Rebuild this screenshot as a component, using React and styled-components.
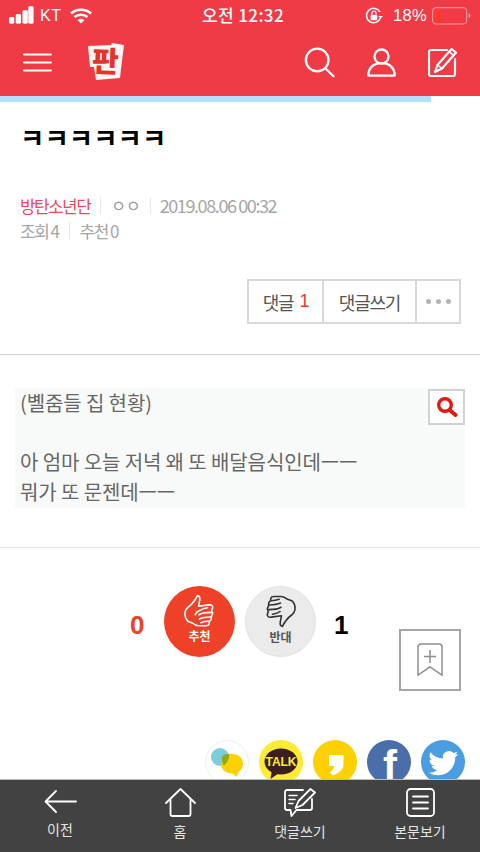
import React from "react";
import styled, { createGlobalStyle } from "styled-components";

const KR = `"Noto Sans CJK KR", "Liberation Sans", sans-serif`;

const Global = createGlobalStyle`
  html, body { margin: 0; padding: 0; background: #fff; }
  * { box-sizing: border-box; }
  body { font-family: ${KR}; }
`;

const Page = styled.div`
  width: 480px; height: 852px; display: flex; flex-direction: column; overflow: hidden; background: #fff;
`;
const Top = styled.header`
  height: 96px; background: #f03b47; color: #fff; display: flex; flex-direction: column; flex: none;
`;
const Status = styled.div`
  height: 30px; display: flex; align-items: center; padding: 1px 0 0 9px; position: relative;
  font-family: "Liberation Sans", sans-serif; font-size: 16px; color: #fff;
`;
const Carrier = styled.span`margin: 0 8px 0 5px; letter-spacing: 0.6px; font-size: 16px;`;
const Clock = styled.span`
  position: absolute; left: 0; right: 0; top: 4px; text-align: center; font-family: ${KR}; font-size: 17px; font-weight: 500; line-height: 22px; letter-spacing: .4px; padding-left: 6px;
`;
const StatusRight = styled.div`
  margin-left: auto; display: flex; align-items: center; padding-right: 9px;
`;
const Percent = styled.span`margin: 0 5px 0 10px; font-size: 16.5px; letter-spacing: .3px;`;
const Nav = styled.div`
  flex: 1; display: flex; align-items: center; padding: 0 23px 1px 23px;
`;
const NavRight = styled.div`margin-left: auto; display: flex; align-items: center; gap: 32px;`;
const Progress = styled.div`height: 6px; background: #fff; flex: none;`;
const ProgressFill = styled.div`height: 100%; background: #b5dffb;`;
const Title = styled.h1`
  margin: 17px 0 0 20px; font-size: 26.5px; line-height: 36px; font-weight: 700; color: #000; letter-spacing: 0;
`;
const Meta = styled.div`
  margin: 38px 0 0 20px; display: flex; flex-direction: column; font-size: 17px; line-height: 25px; color: #a6a6a6; letter-spacing: -1.5px;
`;
const MetaRow = styled.div`display: flex; align-items: center;`;
const Author = styled.span`color: #f5475a; letter-spacing: -1.6px;`;
const Sep = styled.i`
  display: inline-block; width: 1px; height: 17px; background: #e8e8e8; margin: 0 ${p => p.$gap}px;
`;
const Nick = styled.span`letter-spacing: 0; font-size: 16px; color: #999;`;
const DateText = styled.span`font-size: 18px; letter-spacing: -1.4px;`;
const Actions = styled.div`
  margin: 36px 19px 0 auto; display: flex; height: 45px; border: 2px solid #d8d8d8; background: #fff; flex: none;
`;
const ActBtn = styled.div`
  width: ${p => p.$w}px; display: flex; align-items: center; justify-content: center; font-size: 18px; color: #555; letter-spacing: -1.2px;
  & + & { border-left: 2px solid #d8d8d8; }
`;
const Red = styled.span`color: #f33; margin-left: 6px; font-family: "Liberation Sans", sans-serif;`;
const Dots = styled.div`display: flex; gap: 5px;`;
const Dot = styled.i`width: 5px; height: 5px; border-radius: 50%; background: #b4b4b4;`;
const Rule = styled.hr`
  margin: ${p => p.$m}; border: 0; height: 1px; background: ${p => p.$c}; flex: none;
`;
const Quote = styled.div`
  margin: 33px 15px 0; height: 120px; background: #f8f9f9; position: relative; padding: 0 5px; font-size: 20px; line-height: 29.5px; color: #666; letter-spacing: -0.1px; flex: none;
`;
const Line = styled.div`min-height: 29.5px; white-space: nowrap;`;
const Zoom = styled.div`
  position: absolute; top: 1px; right: 0; width: 37px; height: 36px; background: #fff; border: 2px solid #d2d2d2; display: flex; align-items: center; justify-content: center;
`;
const Vote = styled.div`
  margin-top: 38px; height: 71px; display: flex; align-items: center; position: relative; padding-left: 129px; flex: none;
`;
const Count = styled.span`
  font-family: "Liberation Sans", sans-serif; font-weight: 700; font-size: 26px; color: ${p => p.$c}; width: ${p => p.$w}px; padding: 8px 0 0 ${p => p.$pl}px;
`;
const Circle = styled.div`
  width: 71px; height: 71px; border-radius: 50%; margin-right: ${p => p.$mr}px; background: ${p => p.$bg}; color: ${p => p.$fg}; border: ${p => p.$b};
  display: flex; flex-direction: column; align-items: center; padding-top: 8px; font-size: 12px; font-weight: 700; line-height: 14px; flex: none;
`;
const Bookmark = styled.div`
  position: absolute; left: 399px; top: 43px; width: 62px; height: 62px; border: 2px solid #a6a6a6; display: flex; align-items: center; justify-content: center; background: #fff;
`;
const Share = styled.div`
  margin-top: 83px; display: flex; justify-content: flex-end; gap: 10px; padding-right: 15px; height: 39px; flex: none;
  & > svg { flex: none; overflow: visible; }
`;
const Bottom = styled.footer`
  margin-top: auto; height: 73px; background: #424242; border-top: 1px solid #bbb; display: grid; grid-template-columns: repeat(4, 120px); flex: none; position: relative; z-index: 1;
`;
const Tab = styled.div`
  display: flex; flex-direction: column; align-items: center; color: #e6e6e6; font-size: 14px; line-height: 18px; padding-top: 8px; letter-spacing: 0;
  & > svg { margin-bottom: 5px; }
`;
const LogoMark = styled.svg`
  margin: -1px 0 0 35px; overflow: visible; flex: none;
`;

const Bars = () => (
  <svg width="26" height="18" viewBox="0 0 27 18" style={{ marginTop: -1 }}>
    {[[0, 11, 7], [7, 8, 10], [14, 4, 14], [20, 0, 18]].map(([x, y, h]) => (
      <rect key={x} x={x} y={y} width="5.5" height={h} rx="1.5" fill="#fff" />
    ))}
  </svg>
);
const Wifi = () => (
  <svg width="22" height="16" viewBox="0 0 22 16" fill="none" stroke="#fff" strokeWidth="2.6">
    <path d="M1 5.5C6.5.5 15.5.5 21 5.5" />
    <path d="M4.5 9C8 6 14 6 17.5 9" />
    <path d="M11 15.6l3.4-3.6c-2-1.6-4.8-1.6-6.8 0z" fill="#fff" stroke="none" />
  </svg>
);
const Rotation = () => (
  <svg width="18" height="18" viewBox="0 0 18 18" fill="none" stroke="#fff" strokeWidth="1.5">
    <path d="M15.5 11A7.2 7.2 0 1 1 15 5" />
    <path d="M13 9l2.6 2.6L18 9" fill="#fff" stroke="none" />
    <rect x="5.6" y="8" width="6.6" height="5.2" rx=".7" fill="#fff" stroke="none" />
    <path d="M7 8V6.2a2 2 0 0 1 4 0V8" strokeWidth="1.2" />
  </svg>
);
const Battery = () => (
  <svg width="39" height="18" viewBox="0 0 39 18">
    <rect x=".6" y=".6" width="34" height="16.4" rx="3.6" fill="none" stroke="#f6919a" strokeWidth="1.2" />
    <rect x="2.5" y="2.5" width="6.5" height="12.6" rx="1" fill="#ff3b30" />
    <path d="M36.5 6.3c1.4.4 2 1.4 2 2.5s-.6 2.1-2 2.5z" fill="#f6919a" />
  </svg>
);
const Menu = () => (
  <svg width="29" height="19" viewBox="0 0 29 19" stroke="#fff" strokeWidth="2" strokeLinecap="round">
    <path d="M1 1.500h27M1 9.500h27M1 17.500h27" />
  </svg>
);
const Logo = () => (
  <LogoMark width="38" height="38" viewBox="0 0 38 38">
    <path d="M1 3L24 2l1-2 12 2-3 24-1 9-24 2-2-13-4 0z" fill="#fbf6f2" />
    <text x="18.500" y="29" textAnchor="middle" fontFamily={KR} fontWeight="900" fontSize="29" fill="#e6322b" transform="rotate(2 19 19)">판</text>
  </LogoMark>
);
const Search = () => (
  <svg width="31" height="31" viewBox="0 0 31 31" fill="none" stroke="#fff" strokeWidth="2.3" strokeLinecap="round">
    <circle cx="13.2" cy="13" r="11.3" />
    <path d="M21.5 21.5l8 7.8" />
  </svg>
);
const User = () => (
  <svg width="29" height="29" viewBox="0 0 29 29" fill="none" stroke="#fff" strokeWidth="2.3" strokeLinejoin="round">
    <circle cx="14.5" cy="8.5" r="7" />
    <path d="M1.3 27.6c0-7.4 4.8-12.4 13.2-12.4s13.2 5 13.2 12.4z" />
  </svg>
);
const EditIcon = () => (
  <svg width="29" height="29" viewBox="0 0 29 29" fill="none" stroke="#fff" strokeWidth="2.2" strokeLinejoin="round" strokeLinecap="round">
    <path d="M19 2H3a2 2 0 0 0-2 2v22a2 2 0 0 0 2 2h22a2 2 0 0 0 2-2V11" />
    <path d="M23.5 1l4.500 3.500L14 20.500l-7 3.500 2.500-7z" />
    <path d="M21 3.600l4.600 3.700M9.500 17l4.500 3.500" strokeWidth="1.5" />
  </svg>
);
const Magnifier = () => (
  <svg width="22" height="22" viewBox="0 0 22 22" fill="none" stroke="#e01a12" strokeWidth="3.4" strokeLinecap="round">
    <circle cx="9" cy="9" r="6.3" />
    <path d="M14.2 14.4l5.3 4.6" strokeWidth="4" />
  </svg>
);
const ThumbUp = () => (
  <svg width="31" height="33" viewBox="0 0 33 35" fill="none" stroke="#fff" strokeWidth="1.7" strokeLinejoin="round" strokeLinecap="round" style={{ marginBottom: 2 }}>
    <path d="M14.5 1.5c2 .6 2.7 2.4 2.2 5-.4 2.2-1 4.400-1.200 6.500l11-1.500c3-.4 4.300 1.200 4 3.200l-1 2.500 1 3.300-1.300 3-.2 3.500-2 2.300-.2 2.500c-.5 1.500-1.800 2-3.500 2H16c-3 0-5-1.300-7-3l-4.500-1.500C2 26.800 1 24 1 21c0-3.500 1.500-5.500 4-7.500 4-3 6.800-6.500 9.500-12z" />
    <path d="M17 17.500c2-1.800 4.500-2.500 8-3M16 22c2.500-1.800 6-2.500 13-2.500M16.500 26.500c3-1.500 6-2 12-2M18 30.500c3-1.200 5-1.500 8.500-1.500M12 22c1-2.500 2.500-4 5-4.500" />
  </svg>
);
const ThumbDown = () => (
  <svg width="31" height="33" viewBox="0 0 33 35" fill="none" stroke="#333" strokeWidth="1.7" strokeLinejoin="round" strokeLinecap="round" style={{ marginBottom: 2 }}>
    <path d="M18.500 33.500c-2-.6-2.700-2.400-2.200-5 .4-2.200 1-4.400 1.200-6.500l-11 1.500c-3 .4-4.300-1.200-4-3.200l1-2.500-1-3.300 1.300-3 .2-3.500 2-2.300.2-2.500C6.700 2 8 1.500 9.700 1.500H17c3 0 5 1.300 7 3l4.500 1.500C31 8.200 32 11 32 14c0 3.500-1.500 5.500-4 7.500-4 3-6.800 6.500-9.500 12z" />
    <path d="M16 17.500c-2 1.800-4.500 2.500-8 3M17 13c-2.500 1.800-6 2.500-13 2.500M16.500 8.500c-3 1.500-6 2-12 2M15 4.500C12 5.700 10 6 6.500 6" />
  </svg>
);
const BookmarkIcon = () => (
  <svg width="26" height="34" viewBox="0 0 26 34" fill="none" stroke="#8e8e8e" strokeWidth="1.5">
    <path d="M1 32V4a3 3 0 0 1 3-3h18a3 3 0 0 1 3 3v28l-12-8z" />
    <path d="M13 7v13M7 13.500h12" />
  </svg>
);
const ShareStory = () => (
  <svg width="44" height="44" viewBox="0 0 44 44">
    <circle cx="22" cy="22" r="21.500" fill="#fff" stroke="#efefef" />
    <circle cx="15" cy="17" r="9" fill="#7dccdc" />
    <path d="M27 14c6.500 0 11 4 11 10 0 4-2.400 7-5 8.500l-1 4.500-5-3.500c-6 0-11-4-11-9.500 0-6 5-10.500 11-10.500z" fill="#fdd000" />
    <path d="M17 16.500c2-2 5-2.800 7.200-2.300.3 4.500-1.800 9-5.700 11.200-1.400-2.700-2-5.900-1.500-8.900z" fill="#8cac1c" />
  </svg>
);
const ShareTalk = () => (
  <svg width="44" height="44" viewBox="0 0 44 44">
    <circle cx="22" cy="22" r="22" fill="#ffeb33" />
    <ellipse cx="22" cy="21.500" rx="16.500" ry="13" fill="#3b1e1e" />
    <path d="M13 30l-1.500 9L20 33z" fill="#3b1e1e" />
    <text x="22" y="26" textAnchor="middle" fontFamily="Liberation Sans, sans-serif" fontWeight="700" fontSize="12" fill="#ffeb33">TALK</text>
  </svg>
);
const ShareKakaoStory = () => (
  <svg width="44" height="44" viewBox="0 0 44 44">
    <circle cx="22" cy="22" r="22" fill="#fdd000" />
    <path d="M16 15h14.500v10c0 4-4 8-10.500 10.500l-3-3c2-1.500 3.500-3.500 4.500-6.500h-5.500z" fill="#fff" />
  </svg>
);
const ShareFb = () => (
  <svg width="44" height="44" viewBox="0 0 44 44">
    <circle cx="22" cy="22" r="22" fill="#4a6ea9" />
    <text x="23" y="40" textAnchor="middle" fontFamily="Liberation Sans, sans-serif" fontWeight="700" fontSize="42" fill="#fff">f</text>
  </svg>
);
const ShareTw = () => (
  <svg width="44" height="44" viewBox="0 0 24 24">
    <circle cx="12" cy="12" r="12" fill="#4a9de0" />
    <path transform="translate(4 4.500) scale(.68)" d="M23.950 4.570a10 10 0 0 1-2.820.770 4.960 4.960 0 0 0 2.160-2.720c-.950.550-2 .950-3.130 1.180a4.920 4.920 0 0 0-8.380 4.480C7.690 8.090 4.070 6.130 1.640 3.160a4.820 4.820 0 0 0-.660 2.470c0 1.710.870 3.210 2.190 4.100a4.900 4.900 0 0 1-2.230-.620v.060a4.920 4.920 0 0 0 3.950 4.830 5 5 0 0 1-2.210.080 4.940 4.940 0 0 0 4.600 3.420A9.870 9.870 0 0 1 0 19.540a14 14 0 0 0 7.560 2.210c9.050 0 14-7.500 14-13.980 0-.210 0-.420-.020-.630a9.940 9.940 0 0 0 2.460-2.550z" fill="#fff" />
  </svg>
);
const Back = () => (
  <svg width="33" height="27" viewBox="0 0 33 27" fill="none" stroke="#fff" strokeWidth="1.800" strokeLinecap="round" strokeLinejoin="round">
    <path d="M12 3L1.500 13.500 12 24M2 13.500h30" />
  </svg>
);
const Home = () => (
  <svg width="31" height="29" viewBox="0 0 31 29" fill="none" stroke="#fff" strokeWidth="1.800" strokeLinecap="round" strokeLinejoin="round">
    <path d="M1 15L15.500 1 30 15M5.500 11v15a2 2 0 0 0 2 2h16a2 2 0 0 0 2-2V11" />
  </svg>
);
const WriteComment = () => (
  <svg width="32" height="29" viewBox="0 0 32 29" fill="none" stroke="#fff" strokeWidth="1.800" strokeLinecap="round" strokeLinejoin="round">
    <path d="M19 2H3a2 2 0 0 0-2 2v16a2 2 0 0 0 2 2h3.500l1 6 5-6h13.500a2 2 0 0 0 2-2v-9" />
    <path d="M26.500 1l4.500 3.500L18.500 17l-7 3 3-7z" />
    <path d="M5 7.500h8M5 11.500h6M5 15.500h4" strokeWidth="1.500" />
  </svg>
);
const Doc = () => (
  <svg width="29" height="29" viewBox="0 0 29 29" fill="none" stroke="#fff" strokeWidth="1.800" strokeLinecap="round">
    <rect x="1" y="1" width="27" height="27" rx="3.500" />
    <path d="M7 8.500h15M7 14.500h15M7 20.500h15" />
  </svg>
);

export default function App() {
  return (
    <Page>
      <Global />
      <Top>
        <Status>
          <Bars />
          <Carrier>KT</Carrier>
          <Wifi />
          <Clock>오전 12:32</Clock>
          <StatusRight>
            <Rotation />
            <Percent>18%</Percent>
            <Battery />
          </StatusRight>
        </Status>
        <Nav>
          <Menu />
          <Logo />
          <NavRight>
            <Search />
            <User />
            <EditIcon />
          </NavRight>
        </Nav>
      </Top>
      <Progress><ProgressFill style={{ width: 431 }} /></Progress>
      <Title>ㅋㅋㅋㅋㅋㅋ</Title>
      <Meta>
        <MetaRow>
          <Author>방탄소년단</Author>
          <Sep $gap={10} />
          <Nick>ㅇㅇ</Nick>
          <Sep $gap={9} />
          <DateText>2019.08.06 00:32</DateText>
        </MetaRow>
        <MetaRow>
          <span>조회 4</span>
          <Sep $gap={10} />
          <span>추천 0</span>
        </MetaRow>
      </Meta>
      <Actions>
        <ActBtn $w={73}>댓글<Red>1</Red></ActBtn>
        <ActBtn $w={93}>댓글쓰기</ActBtn>
        <ActBtn $w={44}><Dots><Dot /><Dot /><Dot /></Dots></ActBtn>
      </Actions>
      <Rule $m="30px 0 0" $c="#cfcfcf" />
      <Quote>
        <Line>(볠줌들 집 현황)</Line>
        <Line />
        <Line>아 엄마 오늘 저녁 왜 또 배달음식인데ㅡㅡ</Line>
        <Line>뭐가 또 문젠데ㅡㅡ</Line>
        <Zoom><Magnifier /></Zoom>
      </Quote>
      <Rule $m="39px 0 0" $c="#e6e6e6" />
      <Vote>
        <Count $c="#ee4128" $w={35} $pl={1}>0</Count>
        <Circle $bg="#ee4128" $fg="#fff" $mr={10}>
          <ThumbUp />
          <span>추천</span>
        </Circle>
        <Circle $bg="#ebebeb" $fg="#555" $b="1px solid #e2e2e2" $mr={18}>
          <ThumbDown />
          <span>반대</span>
        </Circle>
        <Count $c="#000" $w={20} $pl={0}>1</Count>
        <Bookmark><BookmarkIcon /></Bookmark>
      </Vote>
      <Share>
        <ShareStory />
        <ShareTalk />
        <ShareKakaoStory />
        <ShareFb />
        <ShareTw />
      </Share>
      <Bottom>
        <Tab><Back />이전</Tab>
        <Tab><Home />홈</Tab>
        <Tab><WriteComment />댓글쓰기</Tab>
        <Tab><Doc />본문보기</Tab>
      </Bottom>
    </Page>
  );
}
